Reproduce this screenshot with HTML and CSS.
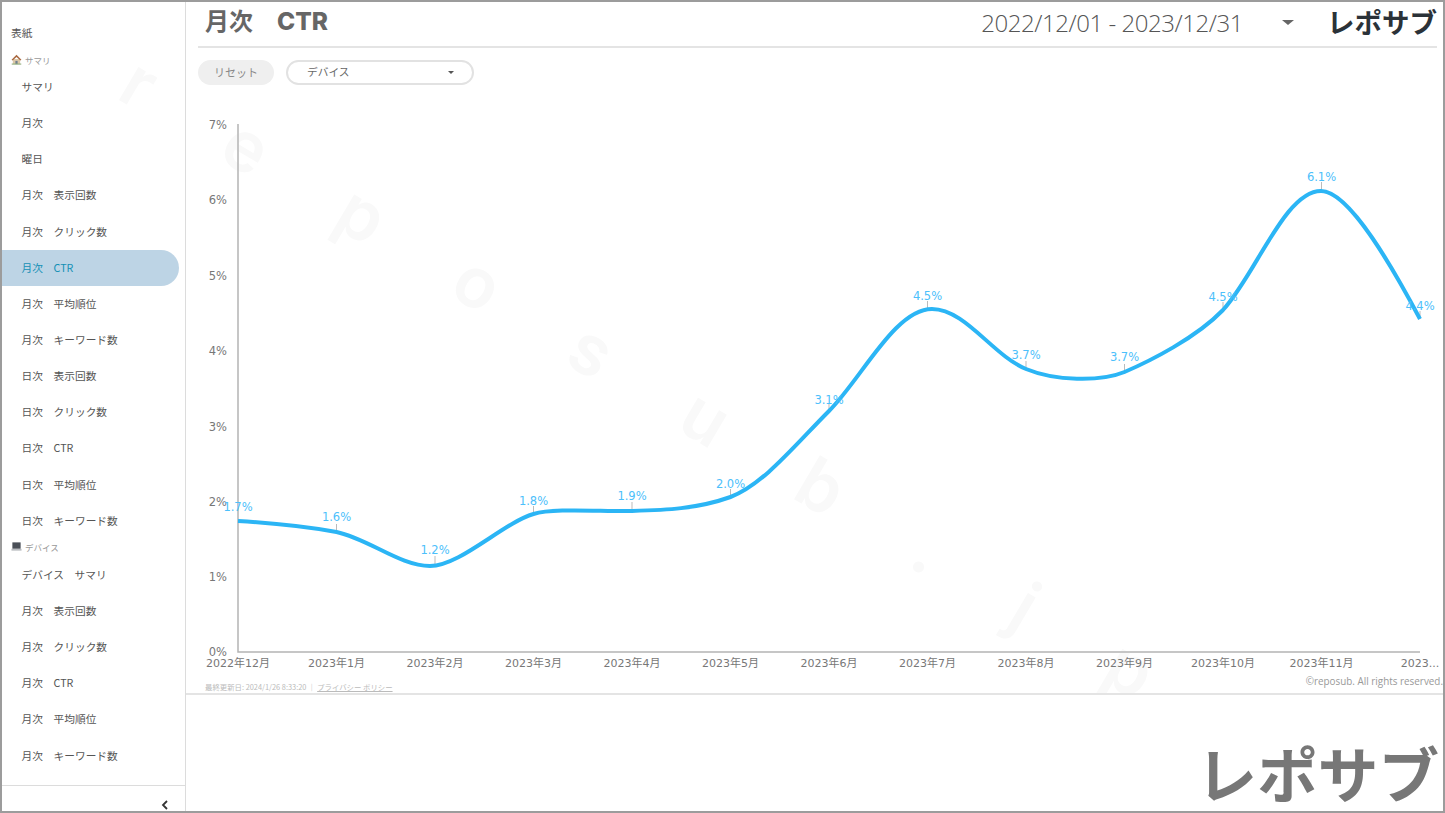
FILE: index.html
```html
<!DOCTYPE html>
<html lang="ja">
<head>
<meta charset="utf-8">
<title>月次 CTR</title>
<link rel="stylesheet" href="styles.css">
</head>
<body>
<div class="frame">
  <aside class="sidebar">
    <nav class="nav">
      <div class="cover">表紙</div>
      <div class="section">
        <svg class="section-icon" viewBox="0 0 12 12"><path d="M2 5.5h8V11H2z" fill="#dcc8a8"/><path d="M6 .8.6 6.4l1.2.8L6 3.2l4.2 4 1.2-.8z" fill="#a9683f"/><rect x="4.8" y="7.5" width="2.4" height="3.5" fill="#6f8090"/><rect x=".8" y="10.4" width="10.4" height="1.2" fill="#8fae7c"/></svg>
        <span>サマリ</span>
      </div>
      <a class="item">サマリ</a>
      <a class="item">月次</a>
      <a class="item">曜日</a>
      <a class="item">月次　表示回数</a>
      <a class="item">月次　クリック数</a>
      <a class="item active">月次　CTR</a>
      <a class="item">月次　平均順位</a>
      <a class="item">月次　キーワード数</a>
      <a class="item">日次　表示回数</a>
      <a class="item">日次　クリック数</a>
      <a class="item">日次　CTR</a>
      <a class="item">日次　平均順位</a>
      <a class="item">日次　キーワード数</a>
      <div class="section section-device">
        <svg class="section-icon" viewBox="0 0 12 12"><rect x="1.5" y="1.5" width="9" height="7" fill="#4a4f57"/><rect x=".5" y="8.5" width="11" height="2" fill="#b9bcc0"/></svg>
        <span>デバイス</span>
      </div>
      <a class="item">デバイス　サマリ</a>
      <a class="item">月次　表示回数</a>
      <a class="item">月次　クリック数</a>
      <a class="item">月次　CTR</a>
      <a class="item">月次　平均順位</a>
      <a class="item">月次　キーワード数</a>
    </nav>
    <div class="collapse">
      <svg class="collapse-icon" viewBox="0 0 8 10"><path d="M6 1 2 5l4 4" fill="none" stroke="#333" stroke-width="1.8"/></svg>
    </div>
  </aside>
  <main class="main">
    <header class="header">
      <h1 class="title">月次　<span class="title-latin">CTR</span></h1>
      <div class="range">2022/12/01 - 2023/12/31</div>
      <span class="range-caret"></span>
      <div class="logo">レポサブ</div>
    </header>
    <div class="filters">
      <button class="reset">リセット</button>
      <div class="select"><span>デバイス</span><i class="select-caret"></i></div>
    </div>
    <svg class="chart" viewBox="0 0 1258 600" width="1258" height="600">
      <g transform="translate(-186,-86)">
        <g class="y-labels">
          <text x="227" y="129">7%</text>
          <text x="227" y="204">6%</text>
          <text x="227" y="280">5%</text>
          <text x="227" y="355">4%</text>
          <text x="227" y="431">3%</text>
          <text x="227" y="506">2%</text>
          <text x="227" y="581">1%</text>
          <text x="227" y="656">0%</text>
        </g>
        <path class="axis" d="M238 124V652H1420"/>
        <path class="ticks" d="M336.5 524v8M435 556v9M533.5 506v8M632 502v9M730.5 489v8M829 403v8M927.5 301v8M1026 361v8M1124.5 364v8M1223 302v8M1321.5 182v9M1420 311v8"/>
        <path class="line" d="M238 521C271 523 303 526 336.5 532C369 539 400 566 430 566C460 566 503 523 533.5 514C553 508 599 511.5 632 511C665 510 697 509 730.5 497C763 485 796 444 829 411C862 378 895 309 932 309C965 309 993 355.5 1026 369C1055 381 1100 382 1124.5 372C1150 361 1196 338 1223 310C1256 274 1285 191 1321 191C1350 191 1395 272 1420 319"/>
        <g class="data-labels">
          <text x="238" y="511">1.7%</text>
          <text x="336.5" y="521">1.6%</text>
          <text x="435" y="554">1.2%</text>
          <text x="533.5" y="505">1.8%</text>
          <text x="632" y="500">1.9%</text>
          <text x="730.5" y="488">2.0%</text>
          <text x="829" y="404">3.1%</text>
          <text x="927.5" y="300">4.5%</text>
          <text x="1026" y="359">3.7%</text>
          <text x="1124.5" y="361">3.7%</text>
          <text x="1223" y="301">4.5%</text>
          <text x="1321.5" y="181">6.1%</text>
          <text x="1420" y="310">4.4%</text>
        </g>
        <g class="x-labels">
          <text x="238" y="667">2022年12月</text>
          <text x="336.5" y="667">2023年1月</text>
          <text x="435" y="667">2023年2月</text>
          <text x="533.5" y="667">2023年3月</text>
          <text x="632" y="667">2023年4月</text>
          <text x="730.5" y="667">2023年5月</text>
          <text x="829" y="667">2023年6月</text>
          <text x="927.5" y="667">2023年7月</text>
          <text x="1026" y="667">2023年8月</text>
          <text x="1124.5" y="667">2023年9月</text>
          <text x="1223" y="667">2023年10月</text>
          <text x="1321.5" y="667">2023年11月</text>
          <text x="1420" y="667">2023...</text>
        </g>
      </g>
    </svg>
    <footer class="footer">
      <span class="updated">最終更新日: 2024/1/26 8:33:20 ｜ <u>プライバシー ポリシー</u></span>
      <span class="copyright">©reposub. All rights reserved.</span>
    </footer>
    <div class="lower">
      <div class="logo-large">レポサブ</div>
    </div>
  </main>
  <div class="watermark" aria-hidden="true">reposub.jp</div>
</div>
</body>
</html>
```
FILE: styles.css
```css
* { box-sizing: border-box; }
html, body { margin: 0; height: 100%; background: #fff; }
body { font-family: "Noto Sans CJK JP", "Noto Sans", sans-serif; overflow: hidden; }

.frame {
  position: relative;
  z-index: 0;
  width: 1445px;
  height: 813px;
  border: 2px solid #9c9c9c;
  display: flex;
  overflow: hidden;
  background: #fff;
}

.sidebar {
  width: 184px;
  flex: none;
  border-right: 1px solid #dcdcdc;
  display: flex;
  flex-direction: column;
}
.nav { flex: 1; padding-top: 23px; }
.cover { font-size: 10.7px; line-height: 16px; color: #555; padding-left: 9px; }
.section {
  display: flex;
  align-items: center;
  gap: 3px;
  height: 18px;
  margin-top: 10px;
  padding: 0 0 1px 9px;
  font-size: 8.5px;
  color: #999;
}
.section-device { margin-top: 0; height: 18px; padding-bottom: 2px; }
.section-icon { width: 11px; height: 11px; flex: none; }
.item {
  display: flex;
  align-items: center;
  width: 177px;
  height: 36.15px;
  padding: 0 0 1px 19.5px;
  font-size: 10.7px;
  color: #555;
  border-radius: 0 18px 18px 0;
}
.item.active { background: #bdd4e5; color: #1590b5; }

.collapse {
  height: 26px;
  border-top: 1px solid #dcdcdc;
  display: flex;
  justify-content: flex-end;
  align-items: flex-end;
  padding: 0 16px 0 0;
}
.collapse-icon { width: 8px; height: 10px; margin-bottom: 1px; }

.main {
  flex: 1;
  min-width: 0;
  display: flex;
  flex-direction: column;
}
.header {
  display: flex;
  align-items: center;
  height: 46px;
  margin: 0 6px 0 12px;
  border-bottom: 2px solid #e4e4e4;
  padding: 0 0 4px 7px;
}
.title { margin: 0 0 3px; font-size: 24px; font-weight: 700; color: #666; line-height: 1; flex: 1; }
.title-latin { font-family: "Inter", sans-serif; font-weight: 800; font-size: 24.5px; }
.range { font-family: "Open Sans", sans-serif; font-weight: 300; font-size: 24px; color: #555; letter-spacing: -0.45px; }
.range-caret {
  width: 0; height: 0;
  margin: 0 33px 0 39px;
  border-left: 6px solid transparent;
  border-right: 6px solid transparent;
  border-top: 5px solid #666;
}
.logo { font-size: 27.5px; font-weight: 700; color: #2b3238; line-height: 1; }

.filters {
  display: flex;
  align-items: flex-start;
  gap: 12px;
  height: 38px;
  padding: 12px 0 0 12px;
}
.reset {
  width: 76px;
  height: 25px;
  border: 0;
  border-radius: 13px;
  background: #efefef;
  font: inherit;
  font-size: 11px;
  color: #888;
  padding: 0 0 2px;
}
.select {
  width: 188px;
  height: 25px;
  border: 2px solid #e2e2e2;
  border-radius: 13px;
  display: flex;
  align-items: center;
  justify-content: space-between;
  padding: 0 18px 2px 19px;
  font-size: 10.7px;
  color: #666;
}
.select-caret {
  width: 0; height: 0;
  border-left: 3px solid transparent;
  border-right: 3px solid transparent;
  border-top: 3px solid #555;
  margin-top: 2px;
}

.chart { display: block; flex: none; overflow: hidden; }
.chart text { font-family: "DejaVu Sans", "Noto Sans CJK JP", sans-serif; }
.y-labels text { font-size: 11.5px; fill: #777; text-anchor: end; }
.x-labels text { font-size: 11px; fill: #777; text-anchor: middle; }
.data-labels text { font-size: 11.5px; fill: #4cc0fb; text-anchor: middle; }
.axis { fill: none; stroke: #b4b4b4; stroke-width: 1.5; }
.ticks { fill: none; stroke: #bbb; stroke-width: 1; }
.line { fill: none; stroke: #2bb5f5; stroke-width: 4; stroke-linejoin: round; }

.footer {
  display: flex;
  justify-content: space-between;
  align-items: flex-end;
  height: 7px;
  padding-left: 19px;
}
.updated { font-size: 7.4px; color: #bbb; line-height: 10px; margin-bottom: 1px; white-space: nowrap; }
.copyright { font-family: "Open Sans", sans-serif; font-size: 9.9px; color: #999; line-height: 12px; margin-bottom: 6px; white-space: nowrap; }

.lower {
  position: relative;
  flex: 1;
  background: #fff;
  border-top: 2px solid #e4e4e4;
  display: flex;
  justify-content: flex-end;
  align-items: flex-end;
  padding-right: 4px;
  overflow: hidden;
}
.logo-large { font-size: 60.6px; font-weight: 700; color: #777; line-height: 78px; white-space: nowrap; }

.watermark {
  position: absolute;
  z-index: -1;
  left: 126px;
  top: 31px;
  font-family: "Inter", sans-serif;
  font-weight: 600;
  font-size: 70px;
  letter-spacing: 91.5px;
  color: #f9f9f9;
  white-space: nowrap;
  transform: rotate(30.6deg);
  transform-origin: left center;
  pointer-events: none;
}
```
